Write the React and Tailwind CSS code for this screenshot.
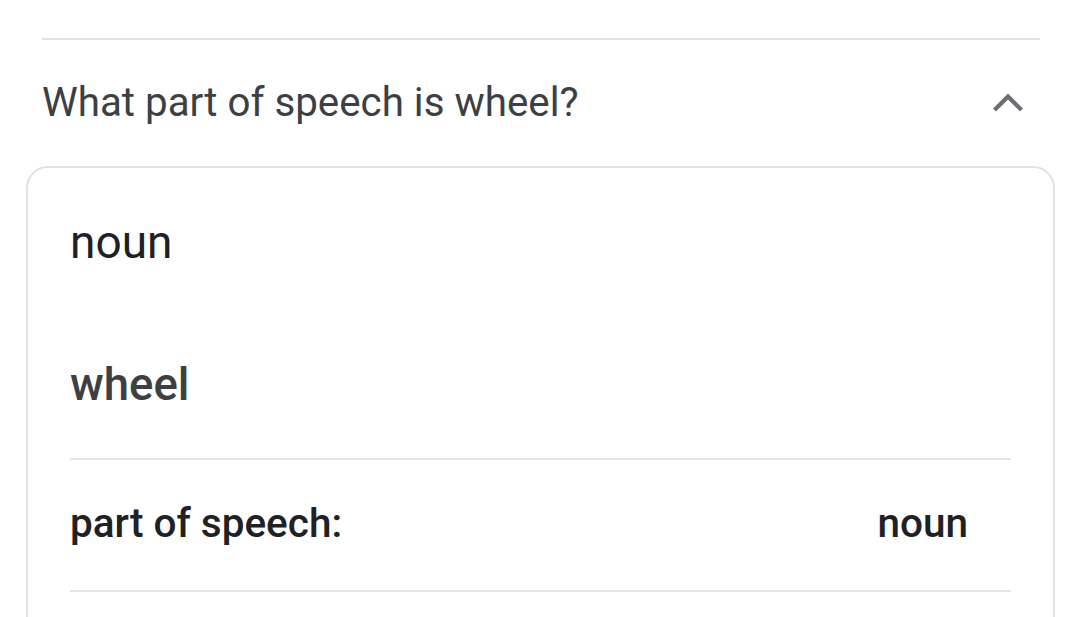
import React from "react";

const ChevronUp = () => (
  <svg width="32" height="20" viewBox="0 0 32 20" fill="none" className="mr-[16px]">
    <polyline points="2.5,17 16,3.5 29.5,17" stroke="#6b6e72" strokeWidth="4.2" strokeLinecap="butt" strokeLinejoin="miter" />
  </svg>
);

const Row = ({ label, value }) => (
  <div className="flex items-center justify-between pt-[43px] pb-[47px] pr-[43px] text-[40.5px] leading-[40px] font-medium text-[#202124]">
    <span>{label}</span>
    <span>{value}</span>
  </div>
);

export default function App() {
  return (
    <div className="min-h-screen bg-white pl-[26px] pr-[25px] pt-[38px] font-['Roboto',sans-serif] overflow-hidden">
      <div className="ml-[16px] mr-[15px] border-t-2 border-[#dfe1e4]">
        <div className="flex h-[126px] items-center justify-between">
          <span className="text-[40.3px] leading-[40px] text-[#3c4043]">What part of speech is wheel?</span>
          <ChevronUp />
        </div>
      </div>
      <div className="h-[600px] rounded-t-[22px] border-2 border-[#e0e2e5] px-[42px] pt-[51px]">
        <div className="text-[46px] leading-[46px] text-[#202124]">noun</div>
        <div className="mt-[97px] text-[45.5px] leading-[46px] font-medium text-[#3c4043]">wheel</div>
        <div className="mt-[50px] border-t-2 border-[#e3e5e8]">
          <Row label="part of speech:" value="noun" />
        </div>
        <div className="border-t-2 border-[#e3e5e8]" />
      </div>
    </div>
  );
}
